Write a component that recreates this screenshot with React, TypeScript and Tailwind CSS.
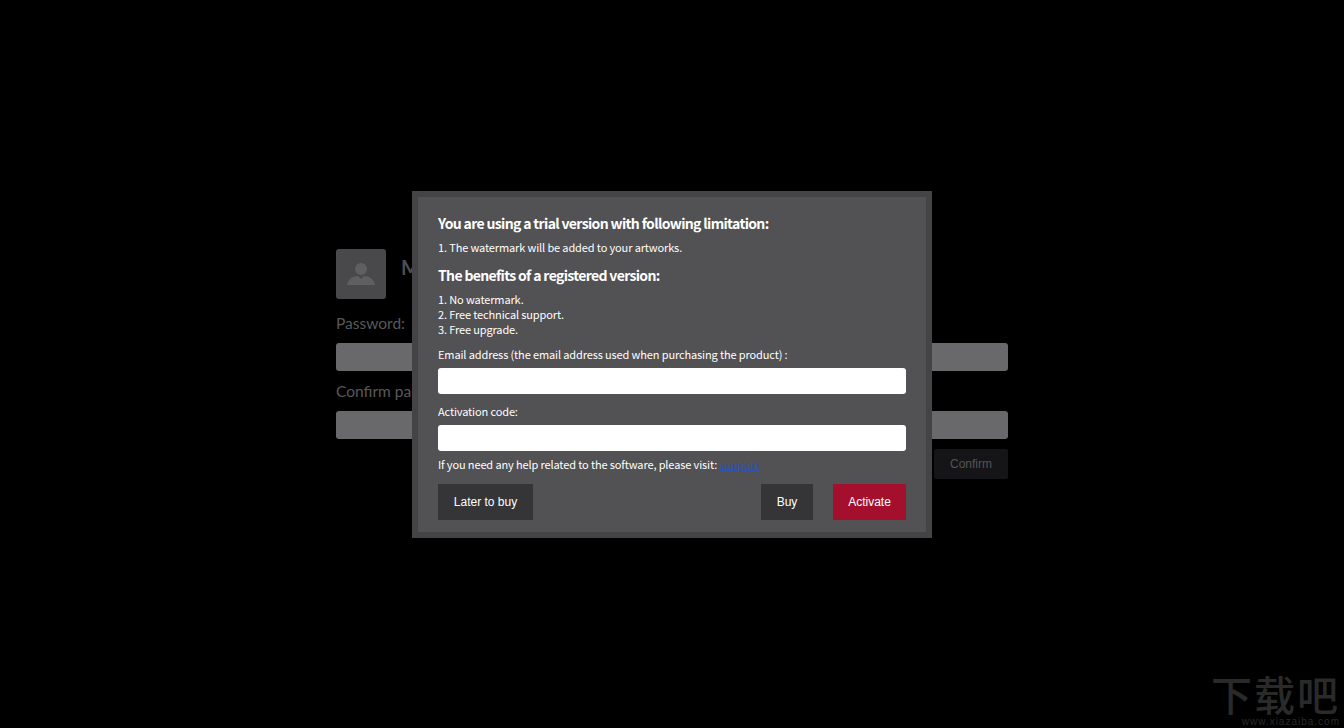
const dialogFont = "font-['Noto_Sans_CJK_SC','Noto_Sans',sans-serif]";
const bodyText = "text-[11px] leading-[15px] tracking-[-0.13px]";
const headingText = "text-[14px] leading-[24px] font-bold tracking-[-0.65px]";

function PasswordForm() {
  return (
    <div className="mx-auto w-[672px] pt-[249px] font-['Lato',sans-serif]">
      <div className="flex gap-[15px]">
        <div className="flex h-[50px] w-[50px] items-center justify-center rounded-[3px] bg-[#49494c]">
          <svg width="30" height="30" viewBox="0 0 30 30" fill="#5f5f62">
            <circle cx="15" cy="10" r="6" />
            <path d="M1 26c0-1 1-4 3-6 2-2 5-3 8-3l3 3 3-3c3 0 6 1 8 3 2 2 3 5 3 6z" />
          </svg>
        </div>
        <span className="mt-[4px] text-[20px] leading-[28px] font-bold text-[#4e4e50]">My</span>
      </div>
      <p className="mt-[14px] text-[15.5px] leading-[20px] text-[#59595b]">Password:</p>
      <div className="mt-[10px] h-[28px] rounded-[3px] bg-[#69686b]" />
      <p className="mt-[8px] text-[15.5px] leading-[24px] text-[#59595b]">Confirm password:</p>
      <div className="mt-[8px] h-[28px] rounded-[3px] bg-[#69686b]" />
      <div className="mt-[10px] flex justify-end">
        <button className="h-[30px] w-[74px] rounded-[2px] bg-[#151416] font-['Liberation_Sans',sans-serif] text-[12px] text-[#555557]">
          Confirm
        </button>
      </div>
    </div>
  );
}

function TrialDialog() {
  return (
    <div className={`absolute top-[191px] left-[412px] h-[347px] w-[520px] border-[6px] border-[#444346] bg-[#525154] px-[20px] text-white ${dialogFont}`}>
      <h2 className={`mt-[14px] ${headingText}`}>You are using a trial version with following limitation:</h2>
      <p className={`mt-[5px] ${bodyText}`}>1. The watermark will be added to your artworks.</p>
      <h2 className={`mt-[8px] ${headingText}`}>The benefits of a registered version:</h2>
      <div className={`mt-[5px] ${bodyText}`}>
        <p>1. No watermark.</p>
        <p>2. Free technical support.</p>
        <p>3. Free upgrade.</p>
      </div>
      <label className={`mt-[10px] block ${bodyText}`}>Email address (the email address used when purchasing the product) :</label>
      <div className="mt-[6px] h-[26px] rounded-[3px] bg-white" />
      <label className={`mt-[10px] block ${bodyText}`}>Activation code:</label>
      <div className="mt-[6px] h-[26px] rounded-[3px] bg-white" />
      <p className={`mt-[6px] ${bodyText}`}>
        If you need any help related to the software, please visit: <a className="text-[#2c52b4] underline">support</a>
      </p>
      <div className="mt-[12px] flex font-['Liberation_Sans',sans-serif] text-[12px]">
        <button className="h-[36px] w-[95px] bg-[#353437]">Later to buy</button>
        <button className="ml-auto h-[36px] w-[52px] bg-[#353437]">Buy</button>
        <button className="ml-[20px] h-[36px] w-[73px] bg-[#a50f2e]">Activate</button>
      </div>
    </div>
  );
}

export default function App() {
  return (
    <div className="relative h-[728px] w-[1344px] overflow-hidden bg-black">
      <PasswordForm />
      <TrialDialog />
      {/* site watermark, bottom right */}
      <div className="absolute top-[671px] right-[4px] flex w-[130px] flex-col items-end whitespace-nowrap text-[#2a2a2a]">
        <span className="font-['Noto_Sans_CJK_SC',sans-serif] text-[41px] leading-[44px] font-medium tracking-[2px]">下载吧</span>
        <span className="mt-[1px] font-['Liberation_Sans',sans-serif] text-[10px] leading-[11px] tracking-[1px]">www.xiazaiba.com</span>
      </div>
    </div>
  );
}
